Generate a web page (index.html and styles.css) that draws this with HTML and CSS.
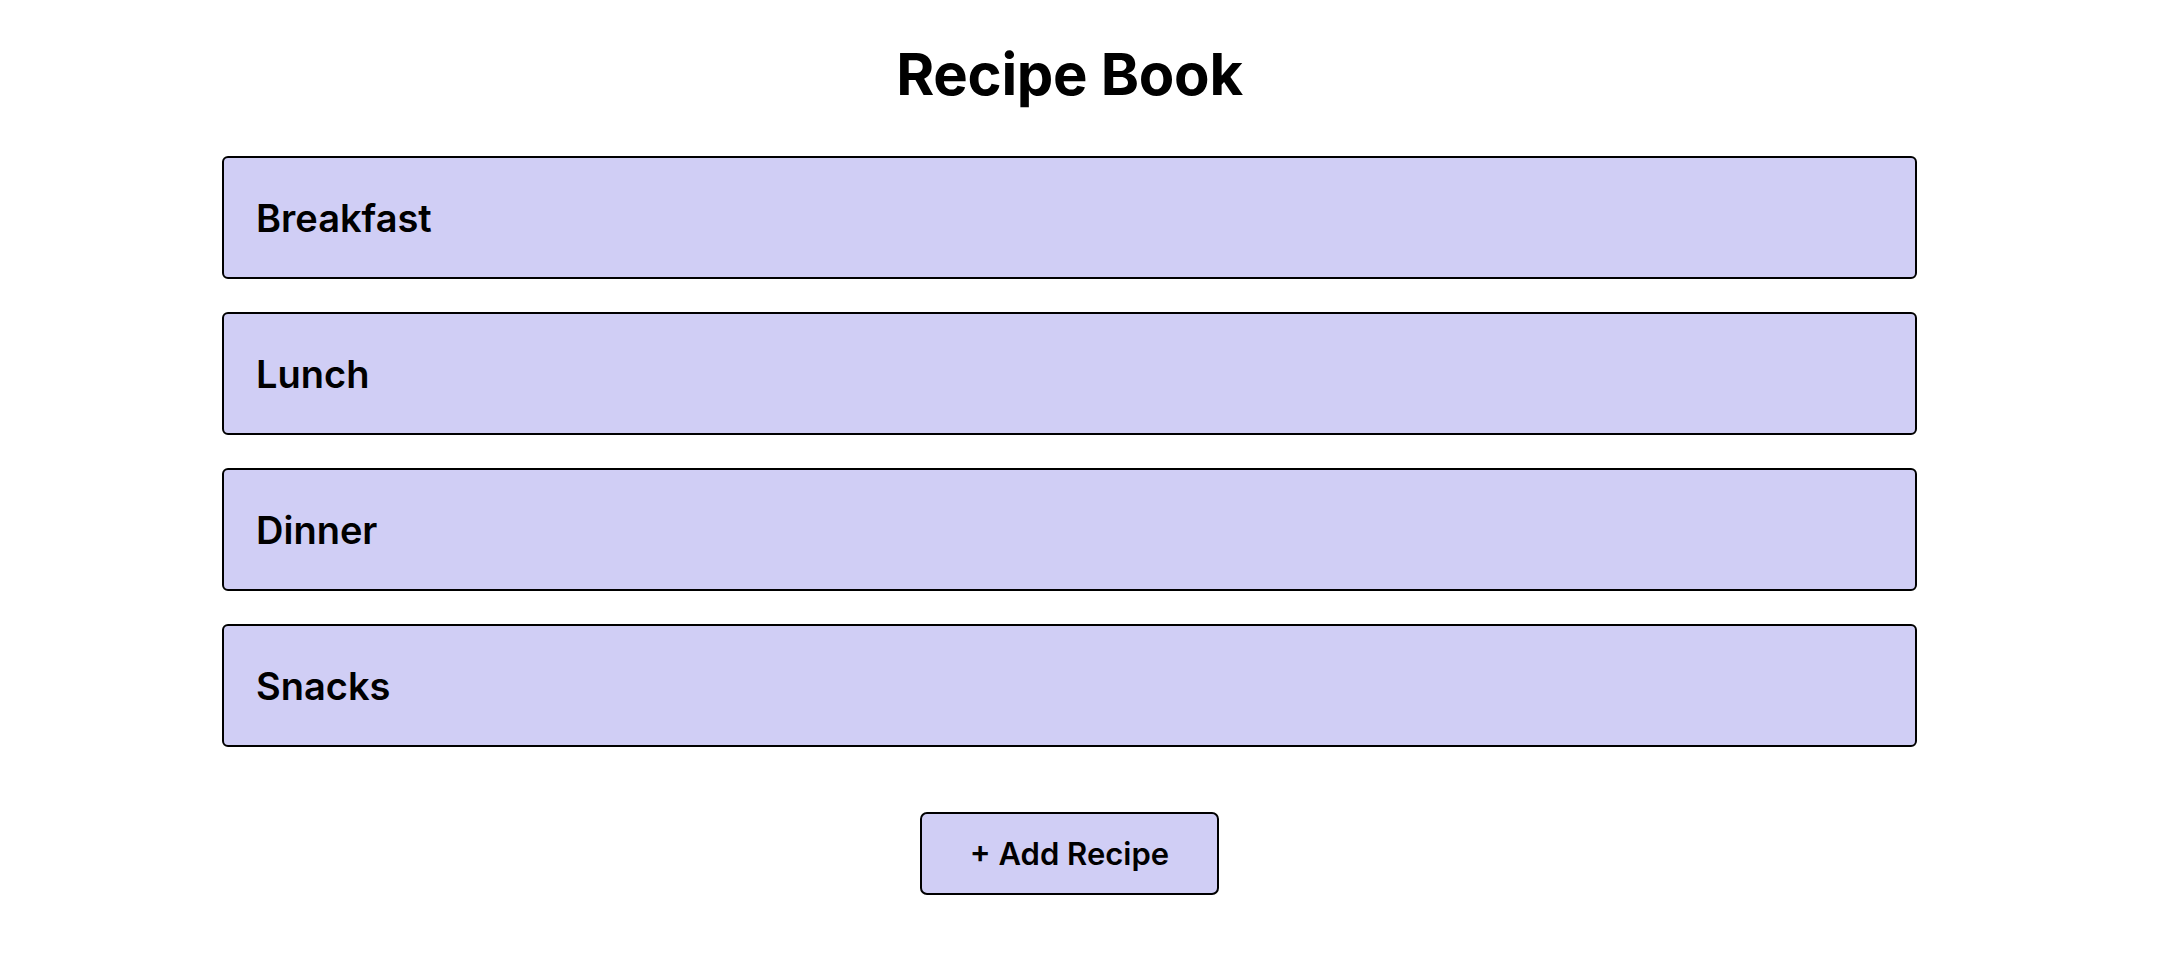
FILE: index.html
```html
<!DOCTYPE html>
<html lang="en">
<head>
<meta charset="utf-8">
<title>Recipe Book</title>
<link rel="stylesheet" href="styles.css">
</head>
<body>
<main class="page">
  <h1 class="title">Recipe Book</h1>
  <ul class="categories">
    <li class="category">Breakfast</li>
    <li class="category">Lunch</li>
    <li class="category">Dinner</li>
    <li class="category">Snacks</li>
  </ul>
  <div class="actions">
    <button class="add-btn" type="button">+ Add Recipe</button>
  </div>
</main>
</body>
</html>
```

FILE: styles.css
```css
html, body {
  margin: 0;
  padding: 0;
  background: #ffffff;
}

body {
  font-family: Inter, "Noto Sans", "Liberation Sans", sans-serif;
  color: #000000;
}

.page {
  width: 1695px;
  margin: 0 0 0 222px;
  padding-top: 38px;
  display: flex;
  flex-direction: column;
}

.title {
  margin: 0;
  text-align: center;
  font-size: 58px;
  font-weight: 700;
  line-height: 72px;
  letter-spacing: -0.3px;
}

.categories {
  list-style: none;
  margin: 46px 0 0 0;
  padding: 0;
  display: flex;
  flex-direction: column;
  gap: 33px;
}

.category {
  box-sizing: border-box;
  height: 123px;
  padding: 0 32px;
  display: flex;
  align-items: center;
  background: #d0cef5;
  border: 2px solid #000000;
  border-radius: 6px;
  font-size: 38px;
  font-weight: 600;
  line-height: 46px;
}

.actions {
  display: flex;
  justify-content: center;
  margin-top: 65px;
}

.add-btn {
  box-sizing: border-box;
  width: 299px;
  height: 83px;
  background: #d0cef5;
  border: 2px solid #000000;
  border-radius: 7px;
  font-family: Inter, "Noto Sans", "Liberation Sans", sans-serif;
  font-size: 31px;
  font-weight: 600;
  color: #000000;
  cursor: pointer;
}
```
